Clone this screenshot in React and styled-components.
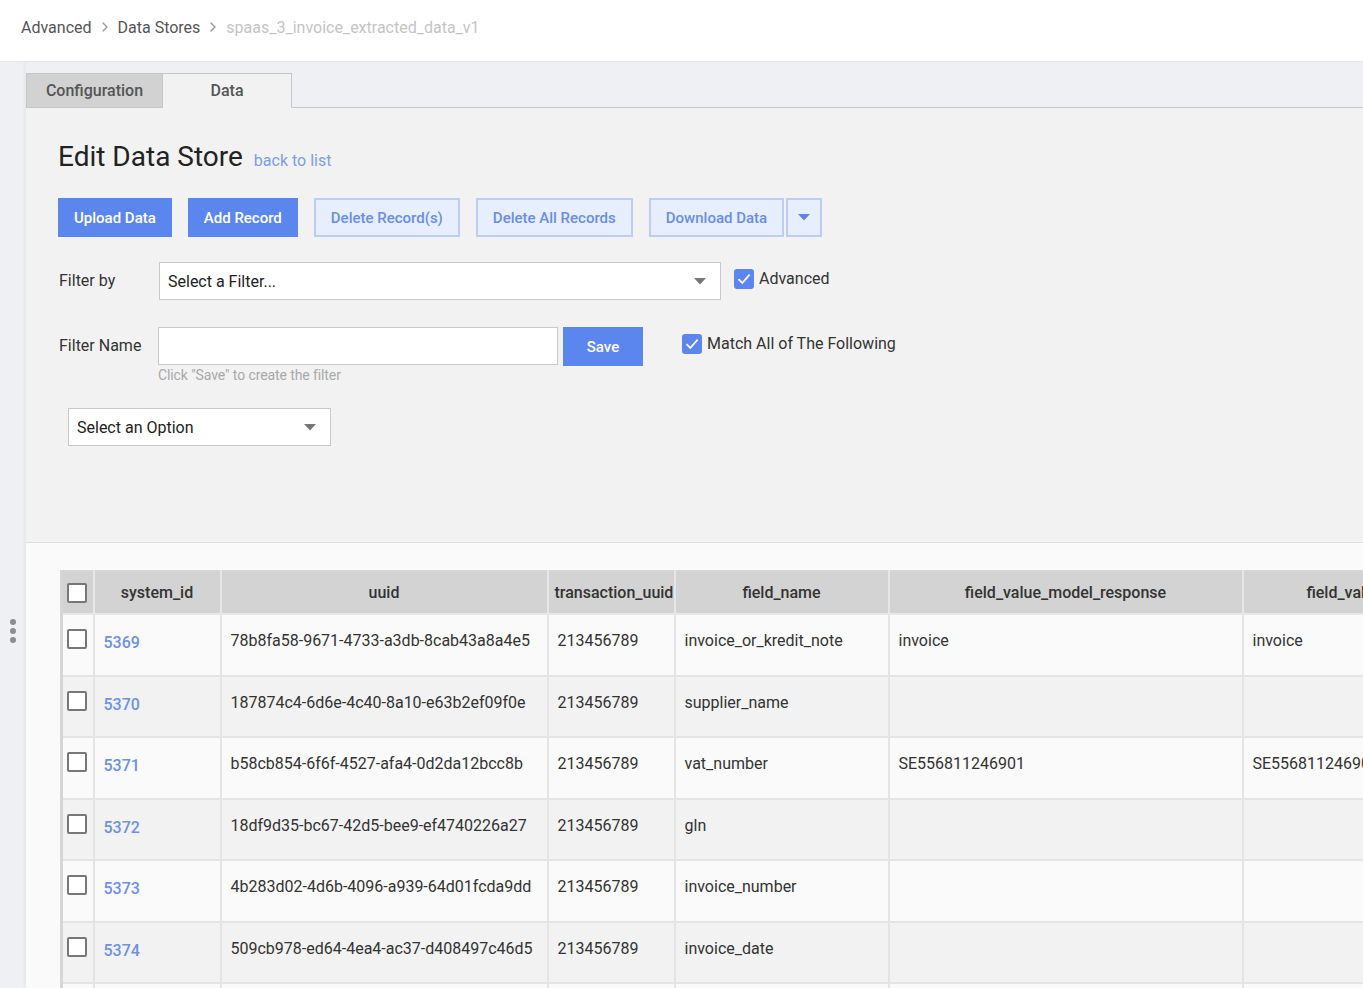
import React from "react";
import styled, { createGlobalStyle } from "styled-components";
import { ChevronRight } from "lucide-react";

const GlobalStyle = createGlobalStyle`
  body {
    margin: 0;
    font-family: Roboto, "Liberation Sans", sans-serif;
    background: #eef0f3;
    overflow: hidden;
    color: #333;
  }
`;

const rows = [
  {
    id: 5369,
    uuid: "78b8fa58-9671-4733-a3db-8cab43a8a4e5",
    tx: "213456789",
    field: "invoice_or_kredit_note",
    model: "invoice",
    value: "invoice",
  },
  {
    id: 5370,
    uuid: "187874c4-6d6e-4c40-8a10-e63b2ef09f0e",
    tx: "213456789",
    field: "supplier_name",
    model: "",
    value: "",
  },
  {
    id: 5371,
    uuid: "b58cb854-6f6f-4527-afa4-0d2da12bcc8b",
    tx: "213456789",
    field: "vat_number",
    model: "SE556811246901",
    value: "SE556811246901",
  },
  {
    id: 5372,
    uuid: "18df9d35-bc67-42d5-bee9-ef4740226a27",
    tx: "213456789",
    field: "gln",
    model: "",
    value: "",
  },
  {
    id: 5373,
    uuid: "4b283d02-4d6b-4096-a939-64d01fcda9dd",
    tx: "213456789",
    field: "invoice_number",
    model: "",
    value: "",
  },
  {
    id: 5374,
    uuid: "509cb978-ed64-4ea4-ac37-d408497c46d5",
    tx: "213456789",
    field: "invoice_date",
    model: "",
    value: "",
  },
  {
    id: 5375,
    uuid: "",
    tx: "",
    field: "",
    model: "",
    value: "",
  },
];

const columns = [
  { key: "check", title: "", width: 32 },
  { key: "id", title: "system_id", width: 127 },
  { key: "uuid", title: "uuid", width: 327 },
  { key: "tx", title: "transaction_uuid", width: 127 },
  { key: "field", title: "field_name", width: 214 },
  { key: "model", title: "field_value_model_response", width: 354 },
  { key: "value", title: "field_value", width: 204 },
];

export default function App() {
  return (
    <>
      <GlobalStyle />
      <Header>
        <Crumb>Advanced</Crumb>
        <ChevronRight size={16} color="#9a9a9a" strokeWidth={2} />
        <Crumb>Data Stores</Crumb>
        <ChevronRight size={16} color="#9a9a9a" strokeWidth={2} />
        <Crumb muted>spaas_3_invoice_extracted_data_v1</Crumb>
      </Header>
      <Main>
        <SideStrip>
          <Handle>
            <Dot />
            <Dot />
            <Dot />
          </Handle>
        </SideStrip>
        <Content>
          <Tabs>
            <Tab>Configuration</Tab>
            <Tab active>Data</Tab>
          </Tabs>
          <Panel>
            <TitleRow>
              <Title>Edit Data Store</Title>
              <BackLink href="#">back to list</BackLink>
            </TitleRow>
            <ButtonRow>
              <Button primary>Upload Data</Button>
              <Button primary>Add Record</Button>
              <Button>Delete Record(s)</Button>
              <Button>Delete All Records</Button>
              <SplitGroup>
                <Button>Download Data</Button>
                <Button caret>
                  <Caret color="#5b85ea" />
                </Button>
              </SplitGroup>
            </ButtonRow>

            <FormRow>
              <Label>Filter by</Label>
              <SelectBox width={562}>
                <span>Select a Filter...</span>
                <Caret color="#777" />
              </SelectBox>
              <CheckLabel style={{ marginLeft: 13 }}>
                <BlueCheck />
                Advanced
              </CheckLabel>
            </FormRow>

            <FormRow top={27}>
              <Label narrow>Filter Name</Label>
              <NameField>
                <TextInput />
                <Hint>Click "Save" to create the filter</Hint>
              </NameField>
              <Button primary save>
                Save
              </Button>
              <CheckLabel style={{ marginLeft: 39 }}>
                <BlueCheck />
                Match All of The Following
              </CheckLabel>
            </FormRow>

            <OptionWrap>
              <SelectBox width={263}>
                <span>Select an Option</span>
                <Caret color="#777" />
              </SelectBox>
            </OptionWrap>
          </Panel>

          <TableSection>
            <Table>
              <colgroup>
                {columns.map((c) => (
                  <col key={c.key} style={{ width: c.width }} />
                ))}
              </colgroup>
              <thead>
                <tr>
                  {columns.map((c) => (
                    <Th key={c.key}>
                      {c.key === "check" ? <Box /> : c.title}
                    </Th>
                  ))}
                </tr>
              </thead>
              <tbody>
                {rows.map((r, i) => (
                  <Row key={r.id} odd={i % 2 === 1}>
                    <Td>
                      <Box />
                    </Td>
                    <Td>
                      <IdLink href="#">{r.id}</IdLink>
                    </Td>
                    <Td>{r.uuid}</Td>
                    <Td>{r.tx}</Td>
                    <Td>{r.field}</Td>
                    <Td>{r.model}</Td>
                    <Td>{r.value}</Td>
                  </Row>
                ))}
              </tbody>
            </Table>
          </TableSection>
        </Content>
      </Main>
    </>
  );
}

const Caret = ({ color }) => (
  <svg width="12" height="7" viewBox="0 0 12 7">
    <path d="M0 0 L12 0 L6 6.5 Z" fill={color} />
  </svg>
);

const BlueCheck = () => (
  <CheckSquare>
    <svg width="16" height="16" viewBox="0 0 16 16">
      <path
        d="M2.5 8.2 L6.3 12 L13.6 3.6"
        fill="none"
        stroke="#fff"
        strokeWidth="1.8"
      />
    </svg>
  </CheckSquare>
);

const Header = styled.div`
  height: 62px;
  background: #fff;
  border-bottom: 1px solid #e6e7ea;
  display: flex;
  align-items: center;
  gap: 5px;
  padding: 0 0 7px 21px;
  box-sizing: border-box;
`;

const Crumb = styled.span`
  font-size: 16px;
  color: ${(p) => (p.muted ? "#c4c4c4" : "#555")};
`;

const Main = styled.div`
  display: flex;
  min-height: 926px;
`;

const SideStrip = styled.div`
  width: 26px;
  flex-shrink: 0;
  background: #eef0f3;
  display: flex;
  justify-content: center;
  padding-top: 557px;
  box-sizing: border-box;
`;

const Handle = styled.div`
  display: flex;
  flex-direction: column;
  gap: 3px;
`;

const Dot = styled.span`
  width: 6px;
  height: 6px;
  border-radius: 50%;
  background: #8d8d8d;
`;

const Content = styled.div`
  flex: 1;
  min-width: 0;
  padding-top: 11px;
  box-shadow: -2px 0 3px rgba(0, 0, 0, 0.04);
`;

const Tabs = styled.div`
  display: flex;
  height: 35px;
  border-bottom: 1px solid #c9c9c9;
  box-sizing: border-box;
`;

const Tab = styled.div`
  width: ${(p) => (p.active ? "129px" : "137px")};
  height: 35px;
  box-sizing: border-box;
  border: 1px solid #c6c6c6;
  border-bottom: ${(p) => (p.active ? "1px solid #f2f2f2" : "1px solid #c6c6c6")};
  border-left: ${(p) => (p.active ? "none" : "1px solid #c6c6c6")};
  background: ${(p) => (p.active ? "#f2f2f2" : "#d2d2d2")};
  color: #555;
  font-size: 16px;
  font-weight: 500;
  display: flex;
  align-items: center;
  justify-content: center;
`;

const Panel = styled.div`
  background: #f2f2f2;
  height: 434px;
  padding: 32px 0 0 32px;
  box-sizing: border-box;
`;

const TitleRow = styled.div`
  display: flex;
  align-items: baseline;
  gap: 11px;
`;

const Title = styled.h1`
  margin: 0;
  font-size: 28px;
  font-weight: 400;
  color: #222;
  line-height: 34px;
`;

const BackLink = styled.a`
  font-size: 16px;
  color: #7e9ce8;
  text-decoration: none;
`;

const ButtonRow = styled.div`
  display: flex;
  gap: 16px;
  margin-top: 24px;
`;

const SplitGroup = styled.div`
  display: flex;
  gap: 2px;
`;

const Button = styled.button`
  height: 39px;
  padding: ${(p) => (p.caret ? "0" : p.primary ? "0 16px" : "0 15px")};
  width: ${(p) => (p.caret ? "36px" : p.save ? "80px" : "auto")};
  box-sizing: border-box;
  font-family: Roboto, "Liberation Sans", sans-serif;
  font-size: 15px;
  font-weight: 500;
  border-radius: 0;
  cursor: pointer;
  display: flex;
  align-items: center;
  justify-content: center;
  background: ${(p) => (p.primary ? "#5b86ee" : "#e7eefd")};
  color: ${(p) => (p.primary ? "#fff" : "#6a8ee8")};
  border: ${(p) => (p.primary ? "none" : "2px solid #bccdf7")};
  margin-left: ${(p) => (p.save ? "5px" : "0")};
`;

const FormRow = styled.div`
  display: flex;
  align-items: flex-start;
  margin-top: ${(p) => (p.top ? p.top : 25)}px;
`;

const Label = styled.div`
  width: ${(p) => (p.narrow ? "99px" : "100px")};
  font-size: 16px;
  color: #333;
  line-height: 37px;
  padding-left: 1px;
`;

const SelectBox = styled.div`
  width: ${(p) => p.width}px;
  height: 38px;
  box-sizing: border-box;
  background: #fff;
  border: 1px solid #c9c9c9;
  display: flex;
  align-items: center;
  justify-content: space-between;
  padding: 0 14px 0 8px;
  font-size: 16px;
  color: #222;
`;

const CheckLabel = styled.label`
  display: flex;
  align-items: center;
  gap: 5px;
  font-size: 16px;
  color: #333;
  height: 37px;
  margin-top: -2px;
`;

const CheckSquare = styled.span`
  width: 20px;
  height: 20px;
  border-radius: 3px;
  background: #5b86ee;
  display: flex;
  align-items: center;
  justify-content: center;
`;

const NameField = styled.div`
  display: flex;
  flex-direction: column;
`;

const TextInput = styled.input`
  width: 400px;
  height: 38px;
  box-sizing: border-box;
  border: 1px solid #c9c9c9;
  background: #fff;
  outline: none;
  margin: 0;
`;

const Hint = styled.div`
  font-size: 14px;
  color: #a9a9a9;
  margin-top: 2px;
  letter-spacing: -0.1px;
`;

const OptionWrap = styled.div`
  margin-top: 25px;
  margin-left: 10px;
`;

const TableSection = styled.div`
  background: #fafafa;
  border-top: 1px solid #dedede;
  padding: 27px 0 0 34px;
  overflow: hidden;
  height: 446px;
  box-sizing: border-box;
`;

const Table = styled.table`
  border-collapse: collapse;
  table-layout: fixed;
  width: 1385px;
  border-left: 3px solid #d6d6d6;
  border-top: 2px solid #d6d6d6;
  font-size: 16px;
  color: #333;
`;

const Th = styled.th`
  height: 41px;
  background: #d3d3d3;
  border: 2px solid #e7e7e7;
  border-top: none;
  font-weight: 500;
  color: #333;
  white-space: nowrap;
  overflow: hidden;
  text-align: center;
  padding: 0 6px;
  &:first-child {
    border-left: none;
    padding: 0 4px;
  }
`;

const Row = styled.tr`
  background: ${(p) => (p.odd ? "#f2f2f2" : "#fafafa")};
`;

const Td = styled.td`
  height: 43.5px;
  border: 2px solid #e4e4e4;
  vertical-align: top;
  padding: 16px 9px 0 9px;
  white-space: nowrap;
  overflow: hidden;
  &:first-child {
    border-left: none;
    padding: 14px 4px 0 4px;
  }
`;

const Box = styled.span`
  display: block;
  width: 16px;
  height: 16px;
  border: 2px solid #777;
  border-radius: 2px;
  background: #fff;
`;

const IdLink = styled.a`
  color: #6f91e3;
  font-weight: 500;
  text-decoration: none;
  display: inline-block;
  margin-top: 2px;
`;
